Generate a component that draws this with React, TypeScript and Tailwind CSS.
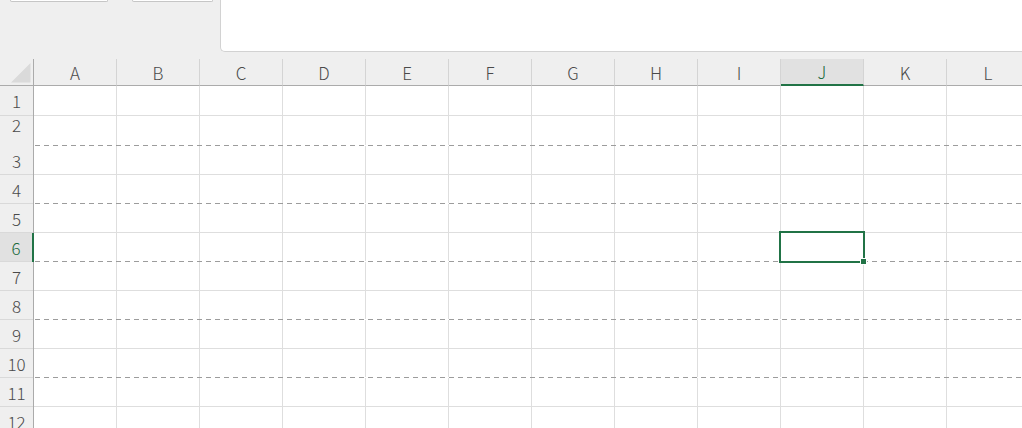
const cols = ['A', 'B', 'C', 'D', 'E', 'F', 'G', 'H', 'I', 'J', 'K', 'L']
const rows = [1, 2, 3, 4, 5, 6, 7, 8, 9, 10, 11, 12]
const dashedRows = [2, 4, 6, 8, 10]

const font = { fontFamily: '"Noto Sans CJK JP", "Noto Sans", sans-serif' }

function TopBar() {
  return (
    <div className="flex h-[52px] bg-[#efefef]">
      <div className="ml-[10px] w-[98px] h-[2px] bg-white border border-t-0 border-[#c6c6c6] rounded-b-[3px]" />
      <div className="ml-[24px] w-[81px] h-[2px] bg-white border border-t-0 border-[#c6c6c6] rounded-b-[3px]" />
      <div className="ml-[7px] flex-1 h-[52px] bg-white border-l border-b border-[#d2d2d2] rounded-bl-[5px]" />
    </div>
  )
}

function HeaderRow() {
  return (
    <div className="flex h-[34px] bg-[#efefef]">
      <div className="w-[34px] shrink-0 flex flex-col">
        <div className="h-[7px]" />
        <div className="flex-1 flex items-end justify-end pr-[2px] pb-[2px] border-r border-b border-[#ababab]">
          <svg width="20" height="20" viewBox="0 0 20 20">
            <polygon points="19.5,0 19.5,19.5 0,19.5" fill="#dadada" />
          </svg>
        </div>
      </div>
      {cols.map((c) => {
        const active = c === 'J'
        return (
          <div key={c} className="w-[83px] shrink-0 flex flex-col">
            <div className="h-[7px]" />
            <div
              className={
                active
                  ? 'flex-1 flex items-center justify-center bg-[#e1e1e1] border-r border-r-[#d4d4d4] border-b-2 border-b-[#217346] text-[#1e6b40]'
                  : 'flex-1 flex items-center justify-center border-r border-r-[#d4d4d4] border-b border-b-[#ababab] text-[#4a4a4a]'
              }
            >
              <span className="text-[17px] font-light leading-none">{c}</span>
            </div>
          </div>
        )
      })}
    </div>
  )
}

function GridRow({ n }: { n: number }) {
  const tall = n <= 2
  const dashed = dashedRows.includes(n)
  const active = n === 6
  return (
    <div className={tall ? 'flex h-[30px]' : 'flex h-[29px]'}>
      <div
        className={
          active
            ? 'w-[34px] shrink-0 flex flex-col bg-[#e1e1e1] border-r-2 border-[#217346] text-[#1e6b40]'
            : 'w-[34px] shrink-0 flex flex-col bg-[#efefef] border-r border-[#ababab] text-[#4a4a4a]'
        }
      >
        {/* row 2 label sits high in the reference */}
        <div className={n === 2 ? 'flex-1 flex items-center justify-center pb-[13px]' : 'flex-1 flex items-center justify-center'}>
          <span className="text-[17px] font-light leading-none">{n}</span>
        </div>
        <div className="h-px bg-[#d9d9d9]" />
      </div>
      <div className="flex flex-col">
        <div className="flex flex-1">
          {cols.map((c) => (
            <div key={c} className="relative w-[83px] shrink-0 border-r border-[#dedede]">
              {active && c === 'J' && (
                <div className="absolute -inset-[2px] z-10 border-2 border-[#217346]">
                  <div className="absolute -right-[4px] -bottom-[4px] w-[7px] h-[7px] border border-white bg-[#217346]" />
                </div>
              )}
            </div>
          ))}
        </div>
        <div
          className={
            dashed
              ? 'h-px bg-[repeating-linear-gradient(to_right,transparent_0_1px,#9c9c9c_1px_6px,transparent_6px_9px)]'
              : 'h-px bg-[#dedede]'
          }
        />
      </div>
    </div>
  )
}

export default function App() {
  return (
    <div className="w-[1022px] h-[428px] overflow-hidden bg-white" style={font}>
      <TopBar />
      <HeaderRow />
      {rows.map((n) => (
        <GridRow key={n} n={n} />
      ))}
    </div>
  )
}
